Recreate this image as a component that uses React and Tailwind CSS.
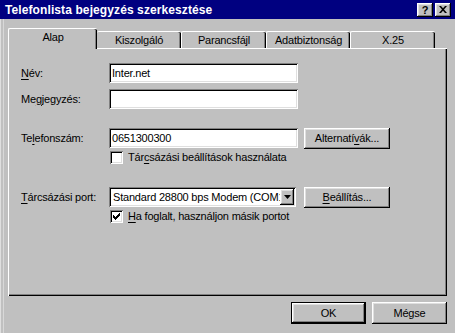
import React from 'react';

const raised = 'shadow-[inset_-1px_-1px_0_#000,inset_1px_1px_0_#fff,inset_-2px_-2px_0_#808080,inset_2px_2px_0_#dfdfdf]';
const sunken = 'shadow-[inset_1px_1px_0_#808080,inset_-1px_-1px_0_#fff,inset_2px_2px_0_#000,inset_-2px_-2px_0_#dfdfdf]';

function Key({ children }) {
    return <span className="underline underline-offset-2">{children}</span>;
}

function Checkbox({ checked }) {
    return (
        <div className={`w-[13px] h-[13px] bg-white ${sunken} flex items-center justify-center shrink-0`}>
            {checked && (
                <svg width="7" height="7" viewBox="0 0 7 7">
                    <path d="M0 2h1v1h1v1h1v-1h1v-1h1v-1h1v-1h1v3h-1v1h-1v1h-1v1h-1v1h-1v-1h-1v-1h-1z" fill="#000" />
                </svg>
            )}
        </div>
    );
}

function Button({ children, className = '', isDefault }) {
    return (
        <div className={`${isDefault ? 'border border-black' : ''} ${className}`}>
            <div className={`h-full w-full flex items-center justify-center ${raised}`}>{children}</div>
        </div>
    );
}

function Field({ value, className = '' }) {
    return (
        <div className={`h-[20px] bg-white ${sunken} flex items-center pl-[3px] ${className}`}>
            {value}
        </div>
    );
}

const tabs = ['Alap', 'Kiszolgáló', 'Parancsfájl', 'Adatbiztonság', 'X.25'];
const tabWidths = ['w-[89px]', 'w-[84px]', 'w-[85px]', 'w-[84px]', 'w-[85px]'];

export default function App() {
    return (
        <div className="w-[455px] h-[333px] bg-[#c0c0c0] text-black text-[11px] tracking-[-0.2px] leading-none overflow-hidden shadow-[inset_1px_0_0_#dfdfdf,inset_3px_0_0_#c0c0c0,inset_4px_0_0_#d8d8d8]" style={{ fontFamily: '"Liberation Sans", Arial, sans-serif' }}>
            {/* Title bar */}
            <div className="h-[19px] bg-[#000080] flex items-center justify-between pl-[5px] pr-[4px]">
                <span className="text-white font-bold text-[12px] tracking-[0.1px]">Telefonlista bejegyzés szerkesztése</span>
                <div className="flex gap-[2px]">
                    <div className={`w-[16px] h-[14px] bg-[#c0c0c0] ${raised} flex items-center justify-center font-bold text-[11px] pt-[1px]`}>?</div>
                    <div className={`w-[16px] h-[14px] bg-[#c0c0c0] ${raised} flex items-center justify-center`}>
                        <svg width="8" height="7" viewBox="0 0 8 7">
                            <path d="M0 0h2l2 2.2 2-2.2h2l-3 3.5 3 3.5h-2l-2-2.2-2 2.2h-2l3-3.5z" fill="#000" />
                        </svg>
                    </div>
                </div>
            </div>

            <div className="pl-[8px] pt-[9px]">
                {/* Tabs */}
                <div className="flex items-end h-[20px] relative z-10">
                    {tabs.map((t, i) => (
                        <div
                            key={t}
                            className={`${tabWidths[i]} flex items-center justify-center rounded-t-[2px] border-t border-l border-white ${i === 0 ? 'h-[21px] mb-[-1px] bg-[#c0c0c0] shadow-[inset_-1px_0_0_#000,inset_-2px_0_0_#808080]' : 'h-[17px] shadow-[inset_-1px_0_0_#000,inset_-2px_0_0_#808080]'} ${i === 1 ? 'border-l-0' : ''}`}
                        >
                            <span className={i === 0 ? 'pb-[3px]' : 'pt-[1px]'}>{t}</span>
                        </div>
                    ))}
                </div>

                {/* Panel */}
                <div className="w-[439px] h-[248px] border-t border-l border-white shadow-[inset_-1px_-1px_0_#000,inset_-2px_-2px_0_#808080] pl-[12px] pt-[14px]">
                    <div className="flex items-center h-[20px]">
                        <span className="w-[88px]"><Key>N</Key>év:</span>
                        <Field value="Inter.net" className="w-[189px]" />
                    </div>
                    <div className="flex items-center h-[20px] mt-[6px]">
                        <span className="w-[88px]">Me<Key>g</Key>jegyzés:</span>
                        <Field value="" className="w-[189px]" />
                    </div>

                    <div className="flex items-start h-[22px] mt-[19px]">
                        <span className="w-[88px] h-[20px] flex items-center">Te<Key>l</Key>efonszám:</span>
                        <Field value="0651300300" className="w-[189px]" />
                        <Button className="w-[86px] h-[21px] ml-[6px]">Alternatí<Key>v</Key>ák...</Button>
                    </div>
                    <div className="flex items-center gap-[5px] ml-[89px] mt-[1px]">
                        <Checkbox />
                        <span>Tár<Key>c</Key>sázási beállítások használata</span>
                    </div>

                    <div className="flex items-start h-[22px] mt-[23px]">
                        <span className="w-[88px] h-[20px] flex items-center"><Key>T</Key>árcsázási port:</span>
                        <div className={`w-[187px] h-[20px] bg-white ${sunken} flex items-center pl-[4px] pr-[2px] overflow-hidden`}>
                            <span className="flex-1 whitespace-nowrap overflow-hidden">Standard 28800 bps Modem (COM1)</span>
                            <div className={`w-[14px] h-[16px] bg-[#c0c0c0] ${raised} flex items-center justify-center shrink-0`}>
                                <svg width="7" height="4" viewBox="0 0 7 4"><path d="M0 0h7l-3.5 4z" fill="#000" /></svg>
                            </div>
                        </div>
                        <Button className="w-[86px] h-[21px] ml-[8px]"><Key>B</Key>eállítás...</Button>
                    </div>
                    <div className="flex items-center gap-[5px] ml-[89px] mt-[1px]">
                        <Checkbox checked />
                        <span><Key>H</Key>a foglalt, használjon másik portot</span>
                    </div>
                </div>

                {/* Footer buttons */}
                <div className="flex justify-end gap-[6px] w-[439px] mt-[6px]">
                    <Button isDefault className="w-[75px] h-[22px]">OK</Button>
                    <Button className="w-[75px] h-[22px]">Mégse</Button>
                </div>
            </div>
        </div>
    );
}
